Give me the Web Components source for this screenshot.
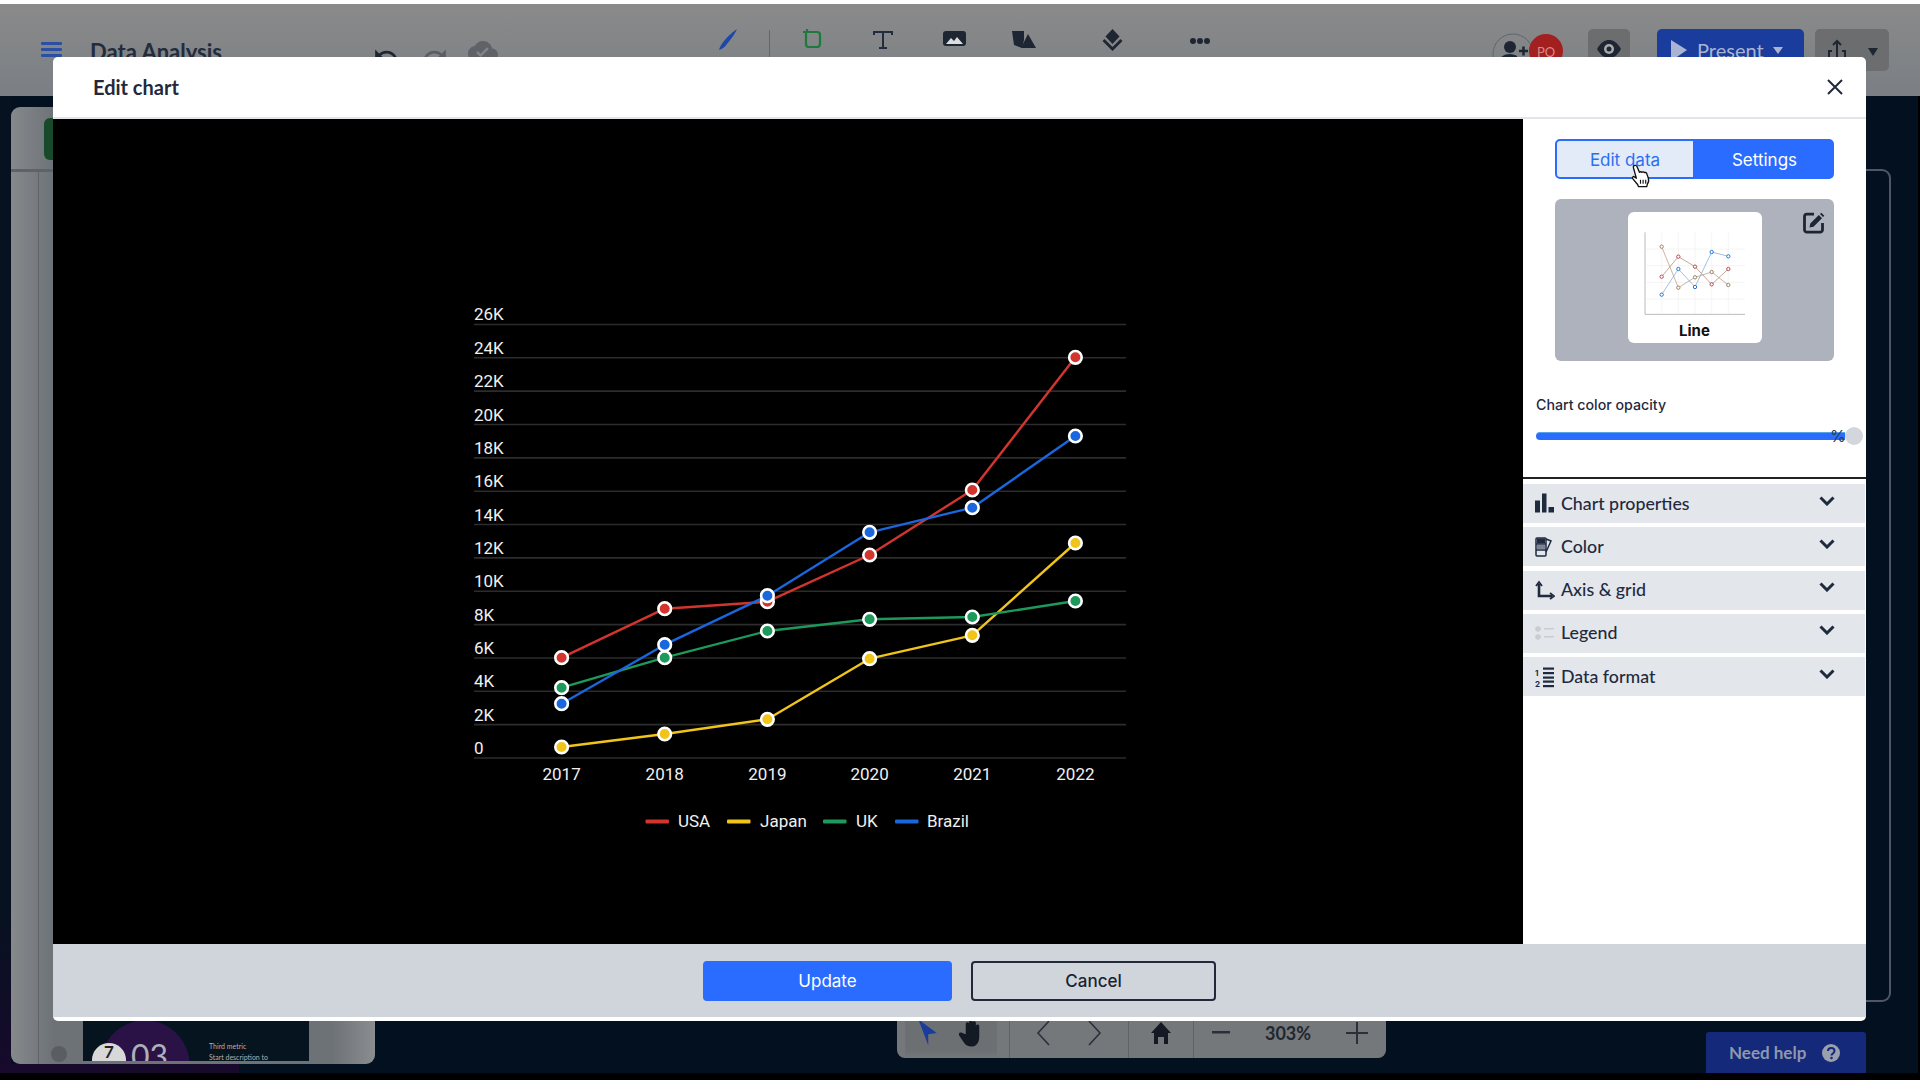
<!DOCTYPE html>
<html lang="en">
<head>
<meta charset="utf-8">
<title>Edit chart</title>
<style>
  html, body { margin: 0; background: #000; }
</style>
</head>
<body>
<chart-editor-app></chart-editor-app>

<script>
// Small helper so every element gets an open shadow root
class Base extends HTMLElement {
  constructor() {
    super();
    this.attachShadow({ mode: 'open' });
  }
  connectedCallback() {
    this.shadowRoot.innerHTML = this.render();
  }
}

const UI_FONT = `Lato, "Liberation Sans", sans-serif`;

// Top toolbar of the editor, dimmed behind the dialog
class TopBar extends Base {
  render() {
    return `
      <style>
        :host {
          display: flex;
          align-items: flex-start;
          height: 96px;
          box-sizing: border-box;
          padding-left: 41px;
          border-top: 4px solid #fff;
          background: linear-gradient(#8a8a8a, #7a7f84);
          color: #232c3d;
          font-family: ${UI_FONT};
          overflow: hidden;
        }
        svg { display: block; flex: none; }
        .title { margin: 34px 0 0 28px; width: 134px; flex: none; font-size: 22px; font-weight: 700; white-space: nowrap; }
        .tile { flex: none; height: 70px; border-radius: 5px; background: #6c6d6f; display: flex; justify-content: center; }
        .present {
          flex: none; width: 147px; height: 60px; margin: 25px 0 0 27px; border-radius: 5px;
          background: #1a3c9c; color: #a9b4d2; display: flex; align-items: flex-start; padding: 9px 0 0 14px;
          box-sizing: border-box; font-size: 20px;
        }
        .present span { margin: 0 9px 0 9px; }
        .people { flex: none; display: flex; margin: 29px 0 0 281px; }
        .badge {
          flex: none; width: 34px; height: 34px; margin: 1px 0 0 -5px; border-radius: 50%;
          background: #a2201f; color: #d88; font-size: 13px; text-align: center; line-height: 36px;
        }
      </style>
      <svg style="margin-top:38px" width="21" height="16" viewBox="0 0 21 16" fill="#2b4fa3"><rect width="21" height="3" rx="1"/><rect y="6" width="21" height="3" rx="1"/><rect y="12" width="21" height="3" rx="1"/></svg>
      <div class="title">Data Analysis</div>
      <svg style="margin:38px 0 0 149px" width="26" height="26" viewBox="0 0 24 24" fill="#1e2633"><path d="M12.5 8c-2.65 0-5.05.99-6.9 2.6L2 7v9h9l-3.62-3.62c1.39-1.16 3.16-1.88 5.12-1.88 3.54 0 6.55 2.31 7.6 5.5l2.37-.78C21.08 11.03 17.15 8 12.5 8z"/></svg>
      <svg style="margin:38px 0 0 23px" width="26" height="26" viewBox="0 0 24 24" fill="#5a5e64"><path d="M18.4 10.6C16.55 8.99 14.15 8 11.5 8c-4.65 0-8.58 3.03-9.96 7.22L3.9 16c1.05-3.19 4.05-5.5 7.6-5.5 1.95 0 3.73.72 5.12 1.88L13 16h9V7l-3.6 3.6z"/></svg>
      <svg style="margin:32px 0 0 20px" width="30" height="30" viewBox="0 0 24 24" fill="#5f6368"><path d="M19.35 10.04C18.67 6.59 15.64 4 12 4 9.11 4 6.6 5.64 5.35 8.04 2.34 8.36 0 10.91 0 14c0 3.31 2.69 6 6 6h13c2.76 0 5-2.24 5-5 0-2.64-2.05-4.78-4.65-4.96zM10 17l-3.5-3.5 1.41-1.41L10 14.17 15.18 9l1.41 1.41L10 17z"/></svg>
      <svg style="margin:24px 0 0 218px" width="22" height="23" viewBox="0 0 22 23"><path d="M21 1C18 3 12 8 8 13c-2 2.5-4 5-5 9 3.500-1 6-3 8-6C15 11 19 6 21 1z" fill="#1d48a8"/></svg>
      <div style="flex:none;width:1px;height:30px;margin:26px 0 0 31px;background:#666"></div>
      <svg style="margin:24px 0 0 31px" width="23" height="20" viewBox="0 0 23 20" fill="none" stroke="#1d7a3c" stroke-width="2.200"><path d="M6 1v3M2 4h14a3 3 0 0 1 3 3v9a3 3 0 0 1-3 3H8a3 3 0 0 1-3-3V4"/></svg>
      <svg style="margin:26px 0 0 49px" width="20" height="19" viewBox="0 0 20 19" fill="none" stroke="#232c3d" stroke-width="2"><path d="M1 5V2h18v3M10 2v16M6 18h8"/></svg>
      <svg style="margin:27px 0 0 50px" width="23" height="15" viewBox="0 0 23 15"><rect width="23" height="15" rx="3" fill="#1e2633"/><path d="M3 13l5-6 3 3 3-4 6 7z" fill="#ddd"/></svg>
      <svg style="margin:27px 0 0 46px" width="24" height="17" viewBox="0 0 24 17" fill="#1e2633"><path d="M0 0h12v9l-2 8-8-3z"/><path d="M16 3l8 14H9z"/></svg>
      <svg style="margin:25px 0 0 66px" width="21" height="22" viewBox="0 0 21 22" fill="#1e2633"><path d="M10.500 0l7 7.500-7 7.500-7-7.500z"/><path d="M0.500 12l10 10 10-10-2-2-8 8-8-8z"/></svg>
      <svg style="margin:33px 0 0 66px" width="22" height="8" viewBox="0 0 22 8" fill="#1e2633"><circle cx="4" cy="4" r="3"/><circle cx="11" cy="4" r="3"/><circle cx="18" cy="4" r="3"/></svg>
      <div class="people">
        <svg width="42" height="42" viewBox="0 0 42 42"><circle cx="21" cy="21" r="20" fill="none" stroke="#606570" stroke-width="1"/><circle cx="18" cy="14" r="6" fill="#1e2633"/><path d="M7 30c0-6 5-9 11-9 3 0 5 1 7 2v7z" fill="#1e2633"/><path d="M27 18h9M31.500 13.500v9" stroke="#1e2633" stroke-width="2.500"/></svg>
        <div class="badge">PO</div>
      </div>
      <div class="tile" style="width:42px;margin:25px 0 0 25px">
        <svg style="margin-top:9px" width="26" height="22" viewBox="0 0 26 22"><path d="M1 11C5 4 9 2 13 2s8 2 12 9c-4 7-8 9-12 9S5 18 1 11z" fill="#1e2633"/><circle cx="13" cy="11" r="5" fill="#aaa"/><circle cx="13" cy="11" r="2.500" fill="#1e2633"/></svg>
      </div>
      <div class="present">
        <svg width="17" height="24" viewBox="0 0 17 24"><path d="M0 2l16 10L0 23z" fill="#a9b4d2"/></svg>
        <span>Present</span>
        <svg style="margin-top:9px" width="10" height="7" viewBox="0 0 10 7"><path d="M0 0h10L5 7z" fill="#a9b4d2"/></svg>
      </div>
      <div class="tile" style="width:74px;height:42px;margin:25px 0 0 11px;align-items:flex-start;gap:21px;padding-top:10px;box-sizing:border-box">
        <svg width="20" height="28" viewBox="0 0 20 28" fill="none" stroke="#1e2633" stroke-width="2"><path d="M5 12H2v14h16V12h-3M10 18V2M6 6l4-4 4 4"/></svg>
        <svg style="margin-top:9px" width="10" height="8" viewBox="0 0 10 8"><path d="M0 0h10L5 8z" fill="#1e2633"/></svg>
      </div>
    `;
  }
}
customElements.define('top-bar', TopBar);

// Left column with the slide list, only its edges show
class SlidePanel extends Base {
  render() {
    return `
      <style>
        :host {
          display: flex;
          flex-direction: column;
          height: 977px;
          box-sizing: border-box;
          padding: 11px 0 0 11px;
          background:
            linear-gradient(to right, #170a2c 239px, #03101f 239px) bottom / 100% 9px no-repeat,
            linear-gradient(#06121f 82%, #170a2c) left / 11px 100% no-repeat,
            #03101f;
          font-family: ${UI_FONT};
        }
        .panel {
          width: 364px; height: 957px; border-radius: 9px; display: flex; flex-direction: column;
          background: linear-gradient(to right, #85898c, #6d7276 12%, #6d7276 88%, #8a8d90);
          overflow: hidden;
        }
        .head { flex: none; height: 65px; border-bottom: 3px solid #5e6367; box-sizing: border-box; padding-top: 11px; }
        .tab { width: 20px; height: 42px; margin-left: 33px; border-radius: 6px 0 0 6px; background: #17492a; }
        .list { flex: 1; margin-left: 27px; border-left: 1px solid #5e6367; display: flex; flex-direction: column; justify-content: flex-end; padding-bottom: 3px; box-sizing: border-box; }
        .row { display: flex; align-items: flex-end; }
        .dot { flex: none; width: 16px; height: 16px; margin: 0 0 -1px 12px; border-radius: 50%; background: #5a5e62; }
        .slide {
          flex: none; width: 226px; height: 40px; margin-left: 16px; box-sizing: border-box; padding-left: 9px;
          background: radial-gradient(circle at 62px 44px, #2a1247 0 44px, #05141f 45px);
          color: #aeb1b8; display: flex; overflow: hidden;
        }
        .seven { flex: none; width: 34px; height: 34px; margin-top: 22px; border-radius: 50%; background: #d8d8d8; color: #222; font-size: 17px; font-weight: 700; text-align: center; line-height: 18px; }
        .big { flex: none; width: 38px; font-size: 32px; line-height: 10px; margin: 30px 0 0 5px; white-space: nowrap; }
        .copy { flex: none; margin: 22px 0 0 40px; font-size: 7px; line-height: 7px; white-space: nowrap; }
        .copy div + div { margin-top: 4px; }
      </style>
      <div class="panel">
        <div class="head"><div class="tab"></div></div>
        <div class="list">
          <div class="row">
            <div class="dot"></div>
            <div class="slide">
              <div class="seven">7</div>
              <div class="big">03</div>
              <div class="copy"><div>Third metric</div><div>Start description to</div></div>
            </div>
          </div>
        </div>
      </div>
    `;
  }
}
customElements.define('slide-panel', SlidePanel);

// Zoom and navigation bar under the canvas
class ZoomBar extends Base {
  render() {
    return `
      <style>
        :host {
          display: flex; flex: none; width: 489px; height: 50px; box-sizing: border-box;
          border-radius: 0 0 8px 8px; background: #74787b; color: #1c2433;
          font-family: ${UI_FONT}; font-size: 18px; font-weight: 700;
        }
        .cell { display: flex; align-items: center; justify-content: space-around; border-left: 1px solid #5f6366; box-sizing: border-box; }
        .tile { width: 92px; margin: 0 12px 0 8px; box-sizing: border-box; display: flex; align-items: center; justify-content: space-around; background: linear-gradient(#6c7073 85%, #74787b); }
        svg { display: block; }
      </style>
      <div class="tile">
        <svg width="22" height="30" viewBox="0 0 18 24"><path d="M2 1l15 11-7 1 0 9z" fill="#1a3c9c"/></svg>
        <svg width="27" height="30" viewBox="0 0 24 26" fill="#141a24"><path d="M6 14V5c0-2 3-2 3 0v5-7c0-2 3-2 3 0v7-6c0-2 3-2 3 0v7-4c0-2 3-2 3 0v9c0 6-3 9-7 9-3 0-5-1-7-4l-4-6c-1-2 1-3 3-2z"/></svg>
      </div>
      <div class="cell" style="width:119px;justify-content:center;gap:32px">
        <svg width="20" height="28" viewBox="0 0 20 28" fill="none" stroke="#2a303a" stroke-width="1.600"><path d="M16 2L5 14l11 12"/></svg>
        <svg width="20" height="28" viewBox="0 0 20 28" fill="none" stroke="#2a303a" stroke-width="1.600"><path d="M4 2l11 12L4 26"/></svg>
      </div>
      <div class="cell" style="width:65px">
        <svg width="22" height="24" viewBox="0 0 22 24" fill="#141a24"><path d="M11 1l10 11h-3v11h-4v-7H8v7H4V12H1z"/></svg>
      </div>
      <div class="cell" style="width:193px;color:#22272f">
        <svg width="18" height="4" viewBox="0 0 18 4"><rect width="18" height="2.500" fill="#2a303a"/></svg>
        <span>303%</span>
        <svg width="22" height="22" viewBox="0 0 22 22" fill="none" stroke="#2a303a" stroke-width="2"><path d="M0 11h22M11 0v22"/></svg>
      </div>
    `;
  }
}
customElements.define('zoom-bar', ZoomBar);

class HelpButton extends Base {
  render() {
    return `
      <style>
        :host {
          display: flex; flex: none; align-items: center; box-sizing: border-box; width: 160px; height: 41px;
          padding-left: 23px; margin-top: 24px; background: #14297a; color: #8f97ad; border-radius: 3px 3px 0 0;
          font-family: ${UI_FONT}; font-size: 17px; font-weight: 700;
        }
        span { margin-right: 16px; }
      </style>
      <span>Need help</span>
      <svg width="18" height="18" viewBox="0 0 18 18"><circle cx="9" cy="9" r="9" fill="#9aa0ad"/><path d="M6 7c0-4 6.500-4 6.500 0 0 2.500-3 2.500-3 4.500" fill="none" stroke="#14297a" stroke-width="2"/><circle cx="9.500" cy="14" r="1.300" fill="#14297a"/></svg>
    `;
  }
}
customElements.define('help-button', HelpButton);

// Line chart, coordinates below are page coordinates through the viewBox
class LineChart extends Base {
  render() {
    const xs = [561.6, 664.7, 767.4, 869.6, 972.3, 1075.4];
    const years = [2017, 2018, 2019, 2020, 2021, 2022];
    const series = [
      { name: 'USA', color: '#d2352d', ys: [657.7, 608.7, 601.7, 555, 490, 357.3] },
      { name: 'Japan', color: '#f0c419', ys: [747, 734, 719.3, 658.7, 635.3, 543] },
      { name: 'UK', color: '#1d9a5b', ys: [687.7, 657.7, 631, 619.3, 617, 601] },
      { name: 'Brazil', color: '#1a66dc', ys: [703.7, 644.7, 595.7, 532.3, 507.7, 436] }
    ];
    const legend = [[645.5, 678], [727, 760], [823, 856], [895, 927]];

    let grid = '';
    for (let i = 0; i <= 13; i++) {
      const y = 758 - i * 33.35;
      grid += `<line x1="474" x2="1126" y1="${y}" y2="${y}" stroke="#2c2c2c" stroke-width="1.600"/>`;
      grid += `<text x="474" y="${y - 4}">${i === 0 ? 0 : i * 2 + 'K'}</text>`;
    }

    const lines = series.map(s => `<polyline fill="none" stroke="${s.color}" stroke-width="2.400" stroke-linejoin="round"
      points="${s.ys.map((y, i) => `${xs[i]},${y}`).join(' ')}"/>`).join('');
    const dots = series.map(s => s.ys.map((y, i) =>
      `<circle cx="${xs[i]}" cy="${y}" r="6.300" fill="${s.color}" stroke="#fff" stroke-width="2.600"/>`).join('')).join('');
    const labels = years.map((yr, i) => `<text x="${xs[i]}" y="780" text-anchor="middle">${yr}</text>`).join('');
    const keys = series.map((s, i) => `
      <rect x="${legend[i][0]}" y="819.500" width="23.500" height="4" rx="1" fill="${s.color}"/>
      <text x="${legend[i][1]}" y="826.500">${s.name}</text>`).join('');

    return `
      <style>
        :host { display: block; flex: none; width: 1470px; height: 825px; background: #000; }
        svg { display: block; }
        text { font-family: Roboto, "Liberation Sans", sans-serif; font-size: 17px; fill: #f0f0f0; }
      </style>
      <svg width="1470" height="825" viewBox="53 119 1470 825">${grid}${lines}${dots}${labels}${keys}</svg>
    `;
  }
}
customElements.define('line-chart', LineChart);

// One collapsed row of the settings list, the icon comes through the slot
class AccordionRow extends Base {
  render() {
    return `
      <style>
        :host {
          display: flex; align-items: center; height: 39px; box-sizing: border-box; padding: 0 30px 0 12px;
          background: #e3e6ea; color: #1f2a3f; font-family: ${UI_FONT}; font-size: 17.800px; font-weight: 500;
        }
        .icon { flex: none; width: 20px; height: 24px; margin-right: 6px; }
        .label { flex: 1; margin-top: -2px; }
        svg { display: block; margin-top: -6px; }
      </style>
      <div class="icon"><slot></slot></div>
      <div class="label">${this.getAttribute('label')}</div>
      <svg width="16" height="10" viewBox="0 0 16 10" fill="none" stroke="#1f2a3f" stroke-width="3"><path d="M1.500 1.500L8 8l6.500-6.500"/></svg>
    `;
  }
}
customElements.define('accordion-row', AccordionRow);

class ChartTabs extends Base {
  render() {
    return `
      <style>
        :host { display: flex; width: 279px; height: 40px; box-sizing: border-box; font-family: Inter, Roboto, sans-serif; font-size: 17px; }
        div { display: flex; align-items: center; justify-content: center; box-sizing: border-box; height: 40px; padding-top: 2px; }
        .on { width: 140px; background: #e2ebf7; color: #2a6ff2; border: 2px solid #2a6cff; border-radius: 5px 0 0 5px; }
        .off { width: 139px; background: #2a6cff; color: #fff; border-radius: 0 5px 5px 0; }
      </style>
      <div class="on">Edit data</div>
      <div class="off">Settings</div>
    `;
  }
}
customElements.define('chart-tabs', ChartTabs);

// Grey box with the current chart type
class ChartTypeCard extends Base {
  render() {
    const rows = [
      { c: '#b59c80', p: [[425, 380], [475, 503], [525, 472], [575, 456], [625, 495]] },
      { c: '#b08a70', p: [[425, 470], [475, 410], [525, 440], [575, 493], [625, 447]] },
      { c: '#7ea6d8', p: [[425, 524], [475, 447], [525, 501], [575, 396], [625, 409]] }
    ];
    const ring = ['#9c8468', '#c2455a', '#2a78c8'];
    const lines = rows.map((r, n) => `
      <polyline fill="none" stroke="${r.c}" stroke-width="2.200" points="${r.p.map(a => a.join(',')).join(' ')}"/>
      ${r.p.map(a => `<circle cx="${a[0]}" cy="${a[1]}" r="5" fill="#fff" stroke="${ring[n]}" stroke-width="3"/>`).join('')}`).join('');
    let grid = '';
    for (const y of [387, 437, 487, 537]) grid += `<path d="M380 ${y}H675" stroke="#eee" stroke-width="2"/>`;
    for (const x of [425, 475, 525, 575, 625]) grid += `<path d="M${x} 337V580" stroke="#f0f0f0" stroke-width="2"/>`;
    return `
      <style>
        :host {
          display: flex; justify-content: center; align-items: flex-start; position: relative;
          width: 279px; height: 162px; padding-top: 13px; box-sizing: border-box; border-radius: 6px; background: #adb2bc;
        }
        .card { width: 134px; height: 131px; border-radius: 6px; background: #fff; padding-top: 15px; box-sizing: border-box; }
        .card svg { display: block; }
        .name { text-align: center; font: 700 15px Inter, "Liberation Sans", sans-serif; color: #111; margin-top: 4px; }
        .edit { position: absolute; left: 248px; top: 13px; }
      </style>
      <div class="card">
        <svg width="134" height="90" viewBox="324 321 402 270">
          ${grid}
          <path d="M375 337V583H675" fill="none" stroke="#bbb" stroke-width="3"/>
          ${lines}
        </svg>
        <div class="name">Line</div>
      </div>
      <svg class="edit" width="22" height="22" viewBox="0 0 22 22" fill="none">
        <path d="M11 2.200H4a2.500 2.500 0 0 0-2.500 2.500v13A2.500 2.500 0 0 0 4 20.200h13a2.500 2.500 0 0 0 2.500-2.500V11" stroke="#1d2635" stroke-width="2.800"/>
        <path d="M6.500 15.500l.8-4 8.500-8.500 3.200 3.200-8.500 8.500zM17 2l1.300-1.300 3 3L20 5z" fill="#1d2635"/>
      </svg>
    `;
  }
}
customElements.define('chart-type-card', ChartTypeCard);

class OpacitySlider extends Base {
  render() {
    return `
      <style>
        :host { display: block; color: #1f2a3f; font-family: Inter, "Liberation Sans", sans-serif; }
        .label { font-size: 14.200px; font-weight: 500; line-height: 18px; }
        .row { display: flex; align-items: center; height: 18px; margin-top: 13px; position: relative; }
        .track { width: 309px; height: 8px; border-radius: 4px 0 0 4px; background: #2a6cff; border-top: 1px solid #56a3e8; box-sizing: border-box; }
        .thumb { width: 18px; height: 18px; border-radius: 50%; background: #d3d6dc; }
        .pct { position: absolute; left: 294px; top: -1px; font-size: 16px; line-height: 20px; color: #2a3a5a; }
      </style>
      <div class="label">Chart color opacity</div>
      <div class="row">
        <div class="track"></div>
        <div class="thumb"></div>
        <div class="pct">%</div>
      </div>
    `;
  }
}
customElements.define('opacity-slider', OpacitySlider);

// Right column of the dialog
class ChartSettings extends Base {
  render() {
    return `
      <style>
        :host { display: flex; flex-direction: column; width: 343px; height: 825px; background: #fff; position: relative; }
        .top { flex: none; height: 360px; box-sizing: border-box; padding: 20px 0 0 32px; border-bottom: 2px solid #222; }
        chart-type-card { margin-top: 20px; }
        opacity-slider { margin: 35px 0 0 -19px; }
        .rows { display: flex; flex-direction: column; gap: 4.300px; margin: 5px 1px 0 0; }
        svg { display: block; }
        .hand { position: absolute; left: 107px; top: 45px; }
      </style>
      <div class="top">
        <chart-tabs></chart-tabs>
        <chart-type-card></chart-type-card>
        <opacity-slider></opacity-slider>
      </div>
      <div class="rows">
        <accordion-row label="Chart properties">
          <svg width="20" height="24" viewBox="0 0 20 24" fill="#1f2a3f"><rect x="0" y="8.500" width="5" height="12"/><rect x="7" y="1.500" width="4.500" height="19"/><rect x="13.500" y="15" width="5.500" height="5.500"/></svg>
        </accordion-row>
        <accordion-row label="Color">
          <svg width="20" height="24" viewBox="0 0 20 24" fill="none" stroke="#1f2a3f" stroke-width="1.500"><rect x="1" y="3" width="10" height="18" rx="1"/><path d="M1 9h10M1 15h10" /><path d="M11 4l5 2-5 11" /><rect x="2" y="3.500" width="8" height="5" fill="#1f2a3f" stroke="none"/><rect x="2" y="10" width="8" height="4" fill="#7a8496" stroke="none"/></svg>
        </accordion-row>
        <accordion-row label="Axis &amp; grid">
          <svg width="20" height="24" viewBox="0 0 20 24" fill="none" stroke="#1f2a3f" stroke-width="2.600"><path d="M4 6v12h13"/><path d="M1 8l3-4 3 4M15 15l4 3-4 3" stroke-width="1.800"/></svg>
        </accordion-row>
        <accordion-row label="Legend">
          <svg width="20" height="24" viewBox="0 0 20 24" fill="#c9ccd1"><circle cx="3" cy="8" r="2.800"/><circle cx="3" cy="16" r="2.800"/><rect x="9" y="7" width="10" height="1.500"/><rect x="9" y="15" width="10" height="1.500"/></svg>
        </accordion-row>
        <accordion-row label="Data format">
          <svg width="20" height="24" viewBox="0 0 20 24" fill="#1f2a3f"><text x="0" y="11" font-family="Inter, sans-serif" font-size="8" font-weight="700">1</text><text x="0" y="22" font-family="Inter, sans-serif" font-size="8" font-weight="700">2</text><rect x="8" y="2.500" width="11" height="2.200"/><rect x="8" y="7" width="11" height="2.200"/><rect x="8" y="11.500" width="11" height="2.200"/><rect x="8" y="15.500" width="11" height="2.200"/><rect x="8" y="20" width="11" height="2.200"/></svg>
        </accordion-row>
      </div>
      <svg class="hand" width="21" height="25" viewBox="0 0 20 24">
        <path d="M4 1.500c1.200-.6 2.200 0 2.700 1.200L9 8c.6-.8 1.800-.8 2.400 0 .6-.6 1.800-.5 2.300.3.700-.4 1.800-.2 2.200.7l1.600 4.500c.7 2.200.2 4.500-1 6l-.5 2.200H8l-.8-2L2.500 14c-.9-1.200.6-2.600 1.800-1.600L6 13.600 3.200 3.600C2.900 2.700 3.200 1.900 4 1.500z" fill="#fff" stroke="#111" stroke-width="1.300" stroke-linejoin="round"/>
        <path d="M10 15v4M12.500 15v4M15 15v4" stroke="#111" stroke-width="1.100"/>
      </svg>
    `;
  }
}
customElements.define('chart-settings', ChartSettings);

// The dialog itself, lies over the whole editor
class EditChartDialog extends Base {
  render() {
    return `
      <style>
        :host {
          position: absolute; left: 53px; top: 57px; width: 1813px; height: 964px;
          display: flex; flex-direction: column; box-sizing: border-box;
          background: #fff; border-radius: 5px; overflow: hidden; padding-bottom: 4px;
        }
        header {
          flex: none; height: 62px; display: flex; align-items: center; justify-content: space-between;
          box-sizing: border-box; padding: 0 23px 0 40px; border-bottom: 2px solid #e2e4ea;
        }
        h1 { margin: 0; font: 700 20px ${UI_FONT}; color: #23293a; }
        .body { flex: none; display: flex; height: 825px; }
        footer {
          flex: 1; display: flex; align-items: center; justify-content: center; gap: 19px;
          background: #d0d5dc; font: 17px Inter, "Liberation Sans", sans-serif;
        }
        button { font: inherit; height: 40px; border-radius: 4px; box-sizing: border-box; padding: 0; }
        .update { width: 249px; background: #2a6cff; border: 0; color: #fff; }
        .cancel { width: 245px; background: transparent; border: 2px solid #23293a; color: #1a2233; font-weight: 500; }
      </style>
      <header>
        <h1>Edit chart</h1>
        <svg width="16" height="16" viewBox="0 0 16 16" fill="none" stroke="#23293a" stroke-width="2"><path d="M1 1l14 14M15 1L1 15"/></svg>
      </header>
      <div class="body">
        <line-chart></line-chart>
        <chart-settings></chart-settings>
      </div>
      <footer>
        <button class="update">Update</button>
        <button class="cancel">Cancel</button>
      </footer>
    `;
  }
}
customElements.define('edit-chart-dialog', EditChartDialog);

class ChartEditorApp extends Base {
  render() {
    return `
      <style>
        :host {
          display: block; position: relative; width: 1920px; height: 1080px; overflow: hidden;
          background: #000; box-sizing: border-box;
        }
        .work { display: flex; height: 977px; width: 1918px; background: #03101f; }
        slide-panel { flex: none; width: 375px; }
        main { flex: 1; display: flex; flex-direction: column; }
        .canvas {
          flex: none; height: 833px; margin: 73px 27px 0 0; box-sizing: border-box;
          border: 2px solid #50566a; border-left: 0; border-radius: 0 9px 9px 0;
        }
        .bottom { display: flex; align-items: flex-start; padding: 6px 0 0 522px; }
        help-button { margin-left: 320px; }
      </style>
      <top-bar></top-bar>
      <div class="work">
        <slide-panel></slide-panel>
        <main>
          <div class="canvas"></div>
          <div class="bottom">
            <zoom-bar></zoom-bar>
            <help-button></help-button>
          </div>
        </main>
      </div>
      <edit-chart-dialog></edit-chart-dialog>
    `;
  }
}
customElements.define('chart-editor-app', ChartEditorApp);
</script>
</body>
</html>
